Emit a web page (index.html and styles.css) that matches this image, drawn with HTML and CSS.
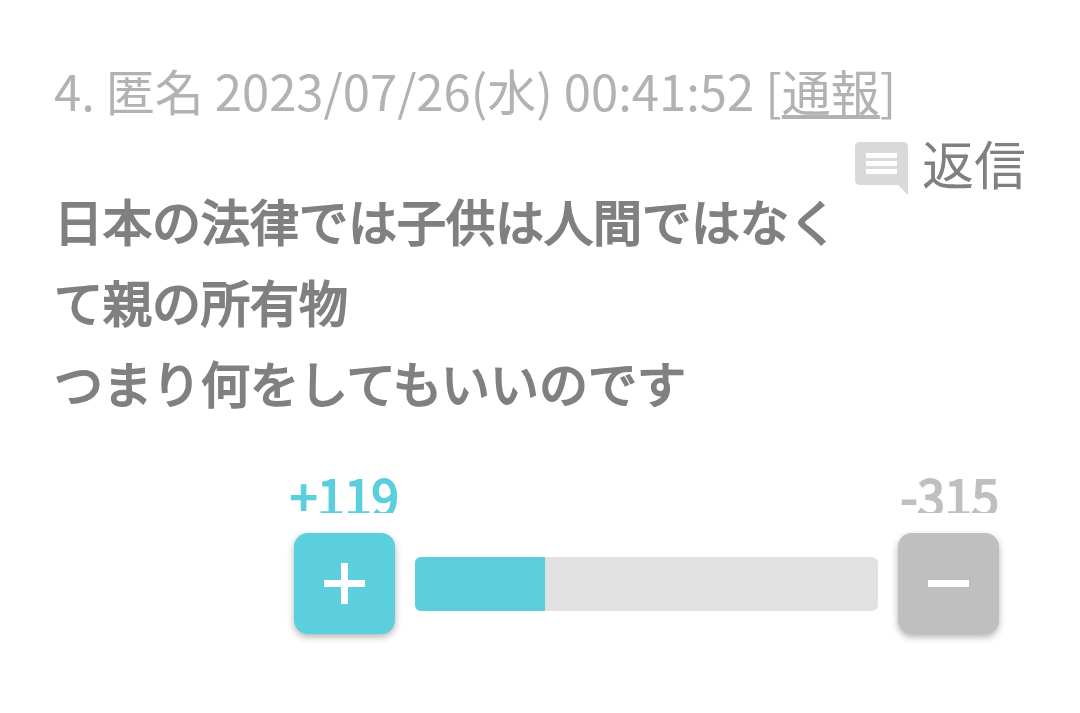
FILE: index.html
```html
<!DOCTYPE html>
<html lang="ja">
<head>
<meta charset="utf-8">
<meta name="viewport" content="width=device-width, initial-scale=1">
<title>コメント</title>
<link rel="stylesheet" href="styles.css">
</head>
<body>
<article class="comment">
  <p class="info">4. 匿名 2023/07/26(水) 00:41:52 [<a href="#report">通報</a>]</p>
  <a class="reply" href="#reply">
    <svg class="reply-icon" viewBox="0 0 53 53" aria-hidden="true"><path fill="#d9d9d9" d="M5 0H48Q53 0 53 5V53L43 43H5Q0 43 0 38V5Q0 0 5 0Z"/><path fill="#fff" d="M11 11H42V16H11ZM11 19H42V24H11ZM11 27H42V32H11Z"/></svg>
    <span>返信</span>
  </a>
  <p class="body">日本の法律では子供は人間ではなくて親の所有物<br>つまり何をしてもいいのです</p>
  <div class="vote">
    <div class="counts"><span class="plus-count">+119</span><span class="minus-count">-315</span></div>
    <div class="controls">
      <button class="btn plus" type="button" aria-label="プラス"><svg viewBox="0 0 41 41" aria-hidden="true"><path d="M17 0H24V17H41V24H24V41H17V24H0V17H17Z"/></svg></button>
      <div class="bar"><div class="fill" style="width:28%"></div></div>
      <button class="btn minus" type="button" aria-label="マイナス"><svg viewBox="0 0 41 41" aria-hidden="true"><path d="M0 17H41V24H0Z"/></svg></button>
    </div>
  </div>
</article>
</body>
</html>
```
FILE: styles.css
```css
* { box-sizing: border-box; }
body { margin: 0; background: #fff; font-family: "Noto Sans CJK JP", sans-serif; }
p { margin: 0; }
.comment { padding: 52px 54px 80px; }
.info { margin-bottom: 3px; color: #b2b2b2; font-size: 49px; line-height: 76px; }
.info a { color: inherit; text-underline-offset: 4px; text-decoration-thickness: 4px; text-decoration-skip-ink: none; }
.reply { display: flex; width: fit-content; margin-left: auto; gap: 14px; align-items: center; height: 64px; color: #808080; font-size: 52px; line-height: 64px; text-decoration: none; }
.reply-icon { width: 53px; height: 53px; margin-top: 10px; }
.body { margin: -16px 184px 0 0; color: #808080; font-size: 49px; line-height: 81px; -webkit-text-stroke: 2px currentColor; }
.vote { margin: 51px 27px 0 240px; }
.counts { display: flex; justify-content: space-between; height: 40px; margin: 0 0 20px -4px; overflow: hidden; font-size: 49px; line-height: 44px; -webkit-text-stroke: 2px currentColor; }
.plus-count { color: #5ccfdf; }
.minus-count { color: #bfbfbf; }
.controls { display: flex; align-items: center; gap: 20px; }
.btn { display: flex; flex: none; align-items: center; justify-content: center; width: 101px; height: 101px; padding: 0; border: 0; border-radius: 14px; box-shadow: 0 3px 7px rgba(0,0,0,.3); }
.btn svg { width: 41px; height: 41px; fill: #fff; }
.plus { background: #5ccfdf; }
.minus { background: #bfbfbf; }
.bar { flex: 1; height: 54px; border-radius: 6px; overflow: hidden; background: #e2e2e2; }
.fill { height: 100%; background: #5ccfdf; }
```
